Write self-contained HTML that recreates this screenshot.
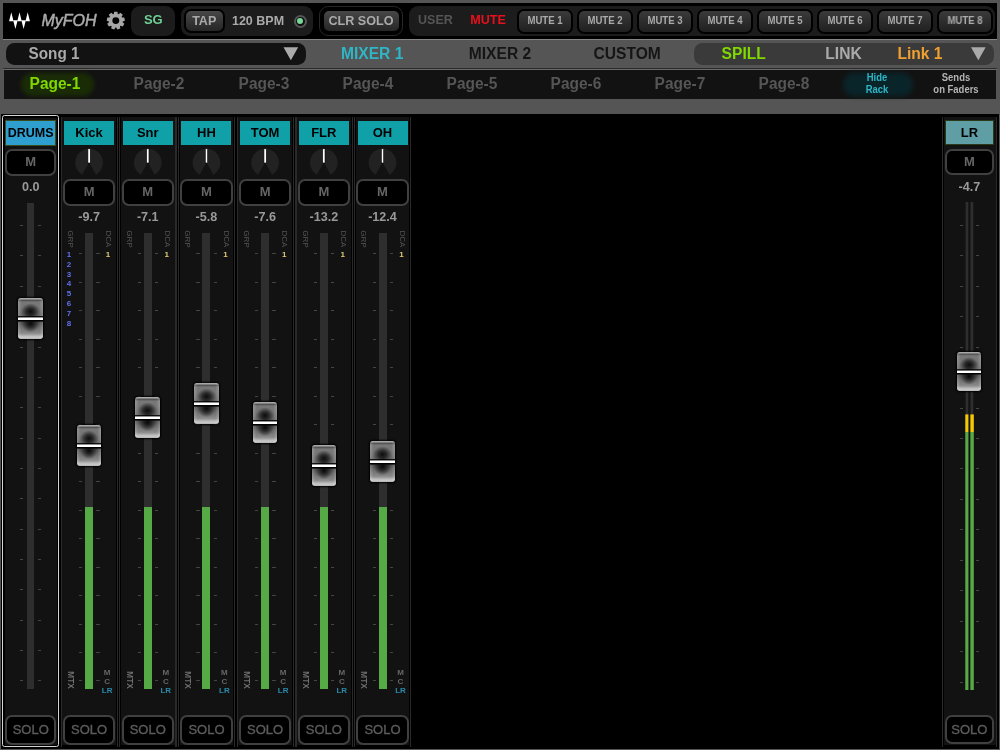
<!DOCTYPE html><html><head><meta charset="utf-8"><title>MyFOH</title><style>
html,body{margin:0;padding:0;}
body{width:1000px;height:750px;overflow:hidden;background:#555;font-family:"Liberation Sans",sans-serif;position:relative;}
div{position:absolute;box-sizing:border-box;}
.t{text-align:center;white-space:nowrap;}
svg{position:absolute;overflow:visible;}
.pill{background:#1c1c1c;border-radius:9px;}
.btn{border:1.5px solid #000;border-radius:6px;background:linear-gradient(#474747,#262626);}
.mbtn{background:#000;border:2px solid #404040;border-radius:7px;}
.lbl{background:#10a0a8;}
.trk{background:#2e2e2e;}
.grn{background:#56aa46;}
.tk{background:#444;height:1px;}
.fk{border-radius:3px;background:
 linear-gradient(#0000 0,#0000 43%,#000 45.5%,#000 47%,#fff 48%,#fff 53.2%,#000 54.2%,#000 56%,#0000 59%),
 radial-gradient(ellipse 38% 20% at 50% 33%,#0c0c0c 0,#0c0c0cb0 45%,#0c0c0c00 100%),
 radial-gradient(ellipse 36% 22% at 50% 62%,#080808 0,#080808a0 45%,#08080800 100%),
 linear-gradient(90deg,#ffffff38 0,#fff0 15%,#fff0 85%,#ffffff38 100%),
 linear-gradient(#b4b4b4 0,#9c9c9c 2.5%,#505050 5.5%,#787878 10%,#767676 22%,#666 44%,#484848 57%,#6a6a6a 70%,#8a8a8a 86%,#cacaca 95.5%,#b4b4b4 100%);
 box-shadow:0 0 2px 1px #000;}
.rot{transform:rotate(90deg);}
</style></head><body><div id="w" style="left:0;top:0;width:1000px;height:750px;will-change:transform;">
<div style="left:3.00px;top:3.00px;width:994.00px;height:35.50px;background:#000;"></div>
<div style="left:3.00px;top:39.00px;width:994.00px;height:1.20px;background:#858585;"></div>
<svg style="left:0;top:0" width="1" height="1"><path fill="#fff" d="M9.05 21.2 L13.55 21.2 L11.30 12.3Z M17.25 21.2 L21.75 21.2 L19.50 12.3Z M25.45 21.2 L29.95 21.2 L27.70 12.3Z M13.15 20.3 L17.65 20.3 L15.40 29.1Z M21.35 20.3 L25.85 20.3 L23.60 29.1Z"/></svg>
<div class="t" style="left:9.00px;top:10.50px;width:120px;height:20px;line-height:20px;font-size:16px;color:#aaa;font-weight:normal;font-style:italic;-webkit-text-stroke:0.5px #aaa;">MyFOH</div>
<svg style="left:0;top:0" width="1" height="1"><path fill="#a6a6a6" fill-rule="evenodd" d="M113.80 13.89 L114.17 11.65 L117.43 11.65 L117.80 13.89 L118.58 14.17 L120.31 12.69 L122.80 14.79 L121.64 16.75 L122.06 17.46 L124.33 17.44 L124.90 20.65 L122.75 21.41 L122.61 22.22 L124.37 23.67 L122.74 26.49 L120.61 25.69 L119.98 26.22 L120.39 28.46 L117.33 29.57 L116.21 27.59 L115.39 27.59 L114.27 29.57 L111.21 28.46 L111.62 26.22 L110.99 25.69 L108.86 26.49 L107.23 23.67 L108.99 22.22 L108.85 21.41 L106.70 20.65 L107.27 17.44 L109.54 17.46 L109.96 16.75 L108.80 14.79 L111.29 12.69 L113.02 14.17Z M112.35 20.60 a3.45 3.45 0 1 0 6.9 0 a3.45 3.45 0 1 0 -6.9 0Z"/></svg>
<div class="pill" style="left:131.00px;top:6.00px;width:44.40px;height:30.00px;"></div>
<div class="t" style="left:93.30px;top:9.90px;width:120px;height:20px;line-height:20px;font-size:13px;color:#6fcf97;font-weight:bold;">SG</div>
<div class="pill" style="left:181.00px;top:6.00px;width:131.50px;height:30.00px;"></div>
<div class="btn" style="left:184.20px;top:9.20px;width:40.40px;height:23.70px;border-width:2px;border-radius:7px;"></div>
<div class="t" style="left:144.20px;top:11.00px;width:120px;height:20px;line-height:20px;font-size:12.5px;color:#aaa;font-weight:bold;">TAP</div>
<div class="t" style="left:198.00px;top:11.00px;width:120px;height:20px;line-height:20px;font-size:12.5px;color:#aaa;font-weight:bold;">120 BPM</div>
<div style="left:293.50px;top:14.50px;width:13.00px;height:13.00px;border-radius:50%;border:2px solid #555;background:#111;"></div>
<div style="left:296.60px;top:17.60px;width:6.80px;height:6.80px;border-radius:50%;background:#78d898;"></div>
<div style="left:319.20px;top:6.20px;width:84.00px;height:29.70px;border:1.5px solid #272727;border-radius:9px;background:#000;"></div>
<div class="btn" style="left:321.80px;top:9.20px;width:79.00px;height:23.70px;border-width:2px;border-radius:7px;"></div>
<div class="t" style="left:301.00px;top:10.90px;width:120px;height:20px;line-height:20px;font-size:12.6px;color:#aaa;font-weight:bold;">CLR SOLO</div>
<div class="pill" style="left:409.00px;top:6.00px;width:586.00px;height:30.00px;"></div>
<div class="t" style="left:375.40px;top:10.40px;width:120px;height:20px;line-height:20px;font-size:12.5px;color:#555;font-weight:bold;">USER</div>
<div class="t" style="left:428.00px;top:10.40px;width:120px;height:20px;line-height:20px;font-size:12.6px;color:#e8101c;font-weight:bold;">MUTE</div>
<div class="btn" style="left:516.50px;top:8.50px;width:56.00px;height:25.00px;background:linear-gradient(#3a3a3a,#202020);border-width:2px;border-radius:7px;"></div>
<div class="t" style="left:484.50px;top:11.40px;width:120px;height:20px;line-height:20px;font-size:10px;color:#aaa;font-weight:bold;transform:scaleX(0.96);">MUTE 1</div>
<div class="btn" style="left:576.50px;top:8.50px;width:56.00px;height:25.00px;background:linear-gradient(#3a3a3a,#202020);border-width:2px;border-radius:7px;"></div>
<div class="t" style="left:544.50px;top:11.40px;width:120px;height:20px;line-height:20px;font-size:10px;color:#aaa;font-weight:bold;transform:scaleX(0.96);">MUTE 2</div>
<div class="btn" style="left:636.50px;top:8.50px;width:56.00px;height:25.00px;background:linear-gradient(#3a3a3a,#202020);border-width:2px;border-radius:7px;"></div>
<div class="t" style="left:604.50px;top:11.40px;width:120px;height:20px;line-height:20px;font-size:10px;color:#aaa;font-weight:bold;transform:scaleX(0.96);">MUTE 3</div>
<div class="btn" style="left:696.50px;top:8.50px;width:56.00px;height:25.00px;background:linear-gradient(#3a3a3a,#202020);border-width:2px;border-radius:7px;"></div>
<div class="t" style="left:664.50px;top:11.40px;width:120px;height:20px;line-height:20px;font-size:10px;color:#aaa;font-weight:bold;transform:scaleX(0.96);">MUTE 4</div>
<div class="btn" style="left:756.50px;top:8.50px;width:56.00px;height:25.00px;background:linear-gradient(#3a3a3a,#202020);border-width:2px;border-radius:7px;"></div>
<div class="t" style="left:724.50px;top:11.40px;width:120px;height:20px;line-height:20px;font-size:10px;color:#aaa;font-weight:bold;transform:scaleX(0.96);">MUTE 5</div>
<div class="btn" style="left:816.50px;top:8.50px;width:56.00px;height:25.00px;background:linear-gradient(#3a3a3a,#202020);border-width:2px;border-radius:7px;"></div>
<div class="t" style="left:784.50px;top:11.40px;width:120px;height:20px;line-height:20px;font-size:10px;color:#aaa;font-weight:bold;transform:scaleX(0.96);">MUTE 6</div>
<div class="btn" style="left:876.50px;top:8.50px;width:56.00px;height:25.00px;background:linear-gradient(#3a3a3a,#202020);border-width:2px;border-radius:7px;"></div>
<div class="t" style="left:844.50px;top:11.40px;width:120px;height:20px;line-height:20px;font-size:10px;color:#aaa;font-weight:bold;transform:scaleX(0.96);">MUTE 7</div>
<div class="btn" style="left:936.50px;top:8.50px;width:56.00px;height:25.00px;background:linear-gradient(#3a3a3a,#202020);border-width:2px;border-radius:7px;"></div>
<div class="t" style="left:904.50px;top:11.40px;width:120px;height:20px;line-height:20px;font-size:10px;color:#aaa;font-weight:bold;transform:scaleX(0.96);">MUTE 8</div>
<div style="left:6.00px;top:43.00px;width:299.80px;height:22.00px;background:#121212;border-radius:8.5px;"></div>
<div class="t" style="left:-6.30px;top:44.00px;width:120px;height:20px;line-height:20px;font-size:15.9px;color:#aaa;font-weight:bold;transform:scaleX(0.962);">Song 1</div>
<div class="t" style="left:312.20px;top:44.40px;width:120px;height:20px;line-height:20px;font-size:15.6px;color:#2fb5c5;font-weight:bold;">MIXER 1</div>
<div class="t" style="left:440.00px;top:44.40px;width:120px;height:20px;line-height:20px;font-size:15.6px;color:#151515;font-weight:bold;">MIXER 2</div>
<div class="t" style="left:567.20px;top:44.40px;width:120px;height:20px;line-height:20px;font-size:15.6px;color:#151515;font-weight:bold;">CUSTOM</div>
<div style="left:694.20px;top:43.00px;width:299.80px;height:22.00px;background:#3a3a3a;border-radius:8.5px;"></div>
<div class="t" style="left:683.70px;top:44.40px;width:120px;height:20px;line-height:20px;font-size:15.6px;color:#80d800;font-weight:bold;">SPILL</div>
<div class="t" style="left:783.50px;top:44.40px;width:120px;height:20px;line-height:20px;font-size:15.6px;color:#aaa;font-weight:bold;">LINK</div>
<div class="t" style="left:860.00px;top:44.40px;width:120px;height:20px;line-height:20px;font-size:15.6px;color:#f0a030;font-weight:bold;">Link 1</div>
<svg style="left:0;top:0" width="1" height="1"><path fill="#aaa" d="M283.5 47.3 L298.2 47.3 L290.85 60.2Z"/><path fill="#aaa" d="M971 47.3 L985.7 47.3 L978.35 60.2Z"/></svg>
<div style="left:3.00px;top:67.60px;width:994.00px;height:1.20px;background:#2a2a2a;"></div>
<div style="left:3.00px;top:69.00px;width:994.00px;height:1.20px;background:#6a6a6a;"></div>
<div style="left:4.00px;top:70.20px;width:992.00px;height:29.00px;background:#121212;"></div>
<div style="left:20.50px;top:72.80px;width:73.50px;height:23.20px;background:#1a2c05;border-radius:11.6px;filter:blur(2.2px);"></div>
<div class="t" style="left:-4.70px;top:74.20px;width:120px;height:20px;line-height:20px;font-size:15.8px;color:#80d800;font-weight:bold;font-kerning:none;transform:scaleX(0.98);">Page-1</div>
<div class="t" style="left:99.47px;top:74.20px;width:120px;height:20px;line-height:20px;font-size:15.8px;color:#555;font-weight:bold;font-kerning:none;transform:scaleX(0.98);">Page-2</div>
<div class="t" style="left:203.64px;top:74.20px;width:120px;height:20px;line-height:20px;font-size:15.8px;color:#555;font-weight:bold;font-kerning:none;transform:scaleX(0.98);">Page-3</div>
<div class="t" style="left:307.81px;top:74.20px;width:120px;height:20px;line-height:20px;font-size:15.8px;color:#555;font-weight:bold;font-kerning:none;transform:scaleX(0.98);">Page-4</div>
<div class="t" style="left:411.98px;top:74.20px;width:120px;height:20px;line-height:20px;font-size:15.8px;color:#555;font-weight:bold;font-kerning:none;transform:scaleX(0.98);">Page-5</div>
<div class="t" style="left:516.15px;top:74.20px;width:120px;height:20px;line-height:20px;font-size:15.8px;color:#555;font-weight:bold;font-kerning:none;transform:scaleX(0.98);">Page-6</div>
<div class="t" style="left:620.32px;top:74.20px;width:120px;height:20px;line-height:20px;font-size:15.8px;color:#555;font-weight:bold;font-kerning:none;transform:scaleX(0.98);">Page-7</div>
<div class="t" style="left:724.49px;top:74.20px;width:120px;height:20px;line-height:20px;font-size:15.8px;color:#555;font-weight:bold;font-kerning:none;transform:scaleX(0.98);">Page-8</div>
<div style="left:842.50px;top:73.30px;width:70.50px;height:23.20px;background:#0a252a;border-radius:11.6px;filter:blur(2.5px);"></div>
<div class="t" style="left:817.00px;top:68.00px;width:120px;height:20px;line-height:20px;font-size:10.3px;color:#2fb5c5;font-weight:bold;transform:scaleX(0.92);">Hide</div>
<div class="t" style="left:817.00px;top:79.60px;width:120px;height:20px;line-height:20px;font-size:10.3px;color:#2fb5c5;font-weight:bold;transform:scaleX(0.92);">Rack</div>
<div class="t" style="left:896.00px;top:68.00px;width:120px;height:20px;line-height:20px;font-size:10.3px;color:#b4b4b4;font-weight:bold;transform:scaleX(0.92);">Sends</div>
<div class="t" style="left:896.00px;top:79.60px;width:120px;height:20px;line-height:20px;font-size:10.3px;color:#b4b4b4;font-weight:bold;transform:scaleX(0.92);">on Faders</div>
<div style="left:1.00px;top:113.50px;width:998.00px;height:635.20px;background:#000;"></div>
<div style="left:2.10px;top:115.30px;width:57.10px;height:631.50px;background:#000;border:1.5px solid #d4d4d4;border-radius:2.5px;"></div>
<div style="left:4.50px;top:118.30px;width:52.40px;height:626.30px;background:#121212;"></div>
<div style="left:5.20px;top:120.20px;width:50.80px;height:25.70px;background:#2f9fd0;border:1px solid #3a4a18;"></div>
<div class="t" style="left:-29.30px;top:123.00px;width:120px;height:20px;line-height:20px;font-size:12.5px;color:#000;font-weight:bold;">DRUMS</div>
<div class="mbtn" style="left:4.60px;top:149.00px;width:51.80px;height:26.60px;"></div>
<div class="t" style="left:-29.30px;top:152.00px;width:120px;height:20px;line-height:20px;font-size:13px;color:#666;font-weight:bold;">M</div>
<div class="t" style="left:-29.30px;top:176.60px;width:120px;height:20px;line-height:20px;font-size:12.6px;color:#999;font-weight:bold;">0.0</div>
<div class="trk" style="left:27.00px;top:203.00px;width:7.40px;height:485.50px;"></div>
<div class="tk" style="left:19.80px;top:225.10px;width:3.40px"></div><div class="tk" style="left:37.80px;top:225.10px;width:3.30px"></div><div class="tk" style="left:19.80px;top:255.45px;width:3.40px"></div><div class="tk" style="left:37.80px;top:255.45px;width:3.30px"></div><div class="tk" style="left:19.80px;top:285.80px;width:3.40px"></div><div class="tk" style="left:37.80px;top:285.80px;width:3.30px"></div><div class="tk" style="left:19.80px;top:316.15px;width:3.40px"></div><div class="tk" style="left:37.80px;top:316.15px;width:3.30px"></div><div class="tk" style="left:19.80px;top:346.50px;width:3.40px"></div><div class="tk" style="left:37.80px;top:346.50px;width:3.30px"></div><div class="tk" style="left:19.80px;top:376.85px;width:3.40px"></div><div class="tk" style="left:37.80px;top:376.85px;width:3.30px"></div><div class="tk" style="left:19.80px;top:407.20px;width:3.40px"></div><div class="tk" style="left:37.80px;top:407.20px;width:3.30px"></div><div class="tk" style="left:19.80px;top:437.55px;width:3.40px"></div><div class="tk" style="left:37.80px;top:437.55px;width:3.30px"></div><div class="tk" style="left:19.80px;top:467.90px;width:3.40px"></div><div class="tk" style="left:37.80px;top:467.90px;width:3.30px"></div><div class="tk" style="left:19.80px;top:498.25px;width:3.40px"></div><div class="tk" style="left:37.80px;top:498.25px;width:3.30px"></div><div class="tk" style="left:19.80px;top:528.60px;width:3.40px"></div><div class="tk" style="left:37.80px;top:528.60px;width:3.30px"></div><div class="tk" style="left:19.80px;top:558.95px;width:3.40px"></div><div class="tk" style="left:37.80px;top:558.95px;width:3.30px"></div><div class="tk" style="left:19.80px;top:589.30px;width:3.40px"></div><div class="tk" style="left:37.80px;top:589.30px;width:3.30px"></div><div class="tk" style="left:19.80px;top:619.65px;width:3.40px"></div><div class="tk" style="left:37.80px;top:619.65px;width:3.30px"></div><div class="tk" style="left:19.80px;top:650.00px;width:3.40px"></div><div class="tk" style="left:37.80px;top:650.00px;width:3.30px"></div><div class="tk" style="left:19.80px;top:680.35px;width:3.40px"></div><div class="tk" style="left:37.80px;top:680.35px;width:3.30px"></div>
<div class="fk" style="left:18.40px;top:298.10px;width:24.60px;height:40.80px;"></div>
<div class="mbtn" style="left:4.80px;top:715.30px;width:51.40px;height:29.40px;"></div>
<div class="t" style="left:-29.30px;top:719.70px;width:120px;height:20px;line-height:20px;font-size:13px;color:#5c5c5c;font-weight:normal;-webkit-text-stroke:0.35px #5c5c5c;">SOLO</div>
<div style="left:60.60px;top:117.00px;width:1.20px;height:629.80px;background:#2a2a2a;"></div>
<div style="left:62.40px;top:117.00px;width:53.60px;height:628.40px;background:#121212;"></div>
<div style="left:116.80px;top:117.00px;width:1.20px;height:629.80px;background:#2a2a2a;"></div>
<div class="lbl" style="left:64.10px;top:120.70px;width:50.00px;height:24.50px;"></div>
<div class="t" style="left:29.10px;top:123.40px;width:120px;height:20px;line-height:20px;font-size:13px;color:#000;font-weight:bold;">Kick</div>
<svg style="left:0;top:0" width="1" height="1"><path fill="#222" d="M89.10 162.60 L82.15 174.64 A13.9 13.9 0 1 1 96.05 174.64Z"/><rect x="87.90" y="148.8" width="2.4" height="14.2" fill="#fff" stroke="#000" stroke-width="0.6"/></svg>
<div class="mbtn" style="left:63.00px;top:178.70px;width:52.20px;height:27.00px;"></div>
<div class="t" style="left:29.10px;top:181.90px;width:120px;height:20px;line-height:20px;font-size:13px;color:#666;font-weight:bold;">M</div>
<div class="t" style="left:29.10px;top:207.00px;width:120px;height:20px;line-height:20px;font-size:12.6px;color:#999;font-weight:bold;">-9.7</div>
<div class="t rot" style="left:54.90px;top:234.00px;width:30px;height:10px;line-height:10px;font-size:8px;color:#555;font-weight:normal;">GRP</div>
<div class="t rot" style="left:93.30px;top:234.00px;width:30px;height:10px;line-height:10px;font-size:8px;color:#555;font-weight:normal;">DCA</div>
<div class="trk" style="left:85.10px;top:233.30px;width:8.00px;height:455.70px;"></div>
<div class="grn" style="left:85.10px;top:507.00px;width:8.00px;height:182.00px;"></div>
<div class="tk" style="left:79.10px;top:253.40px;width:3.30px"></div><div class="tk" style="left:96.30px;top:253.40px;width:3.30px"></div><div class="tk" style="left:79.10px;top:281.87px;width:3.30px"></div><div class="tk" style="left:96.30px;top:281.87px;width:3.30px"></div><div class="tk" style="left:79.10px;top:310.34px;width:3.30px"></div><div class="tk" style="left:96.30px;top:310.34px;width:3.30px"></div><div class="tk" style="left:79.10px;top:338.81px;width:3.30px"></div><div class="tk" style="left:96.30px;top:338.81px;width:3.30px"></div><div class="tk" style="left:79.10px;top:367.28px;width:3.30px"></div><div class="tk" style="left:96.30px;top:367.28px;width:3.30px"></div><div class="tk" style="left:79.10px;top:395.75px;width:3.30px"></div><div class="tk" style="left:96.30px;top:395.75px;width:3.30px"></div><div class="tk" style="left:79.10px;top:424.22px;width:3.30px"></div><div class="tk" style="left:96.30px;top:424.22px;width:3.30px"></div><div class="tk" style="left:79.10px;top:452.69px;width:3.30px"></div><div class="tk" style="left:96.30px;top:452.69px;width:3.30px"></div><div class="tk" style="left:79.10px;top:481.16px;width:3.30px"></div><div class="tk" style="left:96.30px;top:481.16px;width:3.30px"></div><div class="tk" style="left:79.10px;top:509.63px;width:3.30px"></div><div class="tk" style="left:96.30px;top:509.63px;width:3.30px"></div><div class="tk" style="left:79.10px;top:538.10px;width:3.30px"></div><div class="tk" style="left:96.30px;top:538.10px;width:3.30px"></div><div class="tk" style="left:79.10px;top:566.57px;width:3.30px"></div><div class="tk" style="left:96.30px;top:566.57px;width:3.30px"></div><div class="tk" style="left:79.10px;top:595.04px;width:3.30px"></div><div class="tk" style="left:96.30px;top:595.04px;width:3.30px"></div><div class="tk" style="left:79.10px;top:623.51px;width:3.30px"></div><div class="tk" style="left:96.30px;top:623.51px;width:3.30px"></div><div class="tk" style="left:79.10px;top:651.98px;width:3.30px"></div><div class="tk" style="left:96.30px;top:651.98px;width:3.30px"></div><div class="tk" style="left:79.10px;top:680.45px;width:3.30px"></div><div class="tk" style="left:96.30px;top:680.45px;width:3.30px"></div>
<div class="t" style="left:63.00px;top:249.60px;width:12px;height:10px;line-height:10px;font-size:8px;color:#6070f0;font-weight:bold;">1</div>
<div class="t" style="left:63.00px;top:259.55px;width:12px;height:10px;line-height:10px;font-size:8px;color:#6070f0;font-weight:bold;">2</div>
<div class="t" style="left:63.00px;top:269.50px;width:12px;height:10px;line-height:10px;font-size:8px;color:#6070f0;font-weight:bold;">3</div>
<div class="t" style="left:63.00px;top:279.45px;width:12px;height:10px;line-height:10px;font-size:8px;color:#6070f0;font-weight:bold;">4</div>
<div class="t" style="left:63.00px;top:289.40px;width:12px;height:10px;line-height:10px;font-size:8px;color:#6070f0;font-weight:bold;">5</div>
<div class="t" style="left:63.00px;top:299.35px;width:12px;height:10px;line-height:10px;font-size:8px;color:#6070f0;font-weight:bold;">6</div>
<div class="t" style="left:63.00px;top:309.30px;width:12px;height:10px;line-height:10px;font-size:8px;color:#6070f0;font-weight:bold;">7</div>
<div class="t" style="left:63.00px;top:319.25px;width:12px;height:10px;line-height:10px;font-size:8px;color:#6070f0;font-weight:bold;">8</div>
<div class="t" style="left:102.10px;top:249.60px;width:12px;height:10px;line-height:10px;font-size:8px;color:#e0c878;font-weight:bold;">1</div>
<div class="fk" style="left:76.80px;top:425.00px;width:24.60px;height:40.80px;"></div>
<div class="t rot" style="left:55.00px;top:675.30px;width:30px;height:10px;line-height:10px;font-size:8.2px;color:#707070;font-weight:bold;">MTX</div>
<div class="t" style="left:97.10px;top:667.80px;width:20px;height:10px;line-height:10px;font-size:8px;color:#666;font-weight:bold;">M</div>
<div class="t" style="left:97.10px;top:676.80px;width:20px;height:10px;line-height:10px;font-size:8px;color:#666;font-weight:bold;">C</div>
<div class="t" style="left:97.10px;top:686.10px;width:20px;height:10px;line-height:10px;font-size:8px;color:#2a8aaa;font-weight:bold;">LR</div>
<div class="mbtn" style="left:63.00px;top:715.20px;width:52.40px;height:29.40px;"></div>
<div class="t" style="left:29.10px;top:719.70px;width:120px;height:20px;line-height:20px;font-size:13px;color:#5c5c5c;font-weight:normal;-webkit-text-stroke:0.35px #5c5c5c;">SOLO</div>
<div style="left:119.28px;top:117.00px;width:1.20px;height:629.80px;background:#2a2a2a;"></div>
<div style="left:121.08px;top:117.00px;width:53.60px;height:628.40px;background:#121212;"></div>
<div style="left:175.48px;top:117.00px;width:1.20px;height:629.80px;background:#2a2a2a;"></div>
<div class="lbl" style="left:122.78px;top:120.70px;width:50.00px;height:24.50px;"></div>
<div class="t" style="left:87.78px;top:123.40px;width:120px;height:20px;line-height:20px;font-size:13px;color:#000;font-weight:bold;">Snr</div>
<svg style="left:0;top:0" width="1" height="1"><path fill="#222" d="M147.78 162.60 L140.83 174.64 A13.9 13.9 0 1 1 154.73 174.64Z"/><rect x="146.58" y="148.8" width="2.4" height="14.2" fill="#fff" stroke="#000" stroke-width="0.6"/></svg>
<div class="mbtn" style="left:121.68px;top:178.70px;width:52.20px;height:27.00px;"></div>
<div class="t" style="left:87.78px;top:181.90px;width:120px;height:20px;line-height:20px;font-size:13px;color:#666;font-weight:bold;">M</div>
<div class="t" style="left:87.78px;top:207.00px;width:120px;height:20px;line-height:20px;font-size:12.6px;color:#999;font-weight:bold;">-7.1</div>
<div class="t rot" style="left:113.58px;top:234.00px;width:30px;height:10px;line-height:10px;font-size:8px;color:#555;font-weight:normal;">GRP</div>
<div class="t rot" style="left:151.98px;top:234.00px;width:30px;height:10px;line-height:10px;font-size:8px;color:#555;font-weight:normal;">DCA</div>
<div class="trk" style="left:143.78px;top:233.30px;width:8.00px;height:455.70px;"></div>
<div class="grn" style="left:143.78px;top:507.00px;width:8.00px;height:182.00px;"></div>
<div class="tk" style="left:137.78px;top:253.40px;width:3.30px"></div><div class="tk" style="left:154.98px;top:253.40px;width:3.30px"></div><div class="tk" style="left:137.78px;top:281.87px;width:3.30px"></div><div class="tk" style="left:154.98px;top:281.87px;width:3.30px"></div><div class="tk" style="left:137.78px;top:310.34px;width:3.30px"></div><div class="tk" style="left:154.98px;top:310.34px;width:3.30px"></div><div class="tk" style="left:137.78px;top:338.81px;width:3.30px"></div><div class="tk" style="left:154.98px;top:338.81px;width:3.30px"></div><div class="tk" style="left:137.78px;top:367.28px;width:3.30px"></div><div class="tk" style="left:154.98px;top:367.28px;width:3.30px"></div><div class="tk" style="left:137.78px;top:395.75px;width:3.30px"></div><div class="tk" style="left:154.98px;top:395.75px;width:3.30px"></div><div class="tk" style="left:137.78px;top:424.22px;width:3.30px"></div><div class="tk" style="left:154.98px;top:424.22px;width:3.30px"></div><div class="tk" style="left:137.78px;top:452.69px;width:3.30px"></div><div class="tk" style="left:154.98px;top:452.69px;width:3.30px"></div><div class="tk" style="left:137.78px;top:481.16px;width:3.30px"></div><div class="tk" style="left:154.98px;top:481.16px;width:3.30px"></div><div class="tk" style="left:137.78px;top:509.63px;width:3.30px"></div><div class="tk" style="left:154.98px;top:509.63px;width:3.30px"></div><div class="tk" style="left:137.78px;top:538.10px;width:3.30px"></div><div class="tk" style="left:154.98px;top:538.10px;width:3.30px"></div><div class="tk" style="left:137.78px;top:566.57px;width:3.30px"></div><div class="tk" style="left:154.98px;top:566.57px;width:3.30px"></div><div class="tk" style="left:137.78px;top:595.04px;width:3.30px"></div><div class="tk" style="left:154.98px;top:595.04px;width:3.30px"></div><div class="tk" style="left:137.78px;top:623.51px;width:3.30px"></div><div class="tk" style="left:154.98px;top:623.51px;width:3.30px"></div><div class="tk" style="left:137.78px;top:651.98px;width:3.30px"></div><div class="tk" style="left:154.98px;top:651.98px;width:3.30px"></div><div class="tk" style="left:137.78px;top:680.45px;width:3.30px"></div><div class="tk" style="left:154.98px;top:680.45px;width:3.30px"></div>
<div class="t" style="left:160.78px;top:249.60px;width:12px;height:10px;line-height:10px;font-size:8px;color:#e0c878;font-weight:bold;">1</div>
<div class="fk" style="left:135.48px;top:397.00px;width:24.60px;height:40.80px;"></div>
<div class="t rot" style="left:113.68px;top:675.30px;width:30px;height:10px;line-height:10px;font-size:8.2px;color:#707070;font-weight:bold;">MTX</div>
<div class="t" style="left:155.78px;top:667.80px;width:20px;height:10px;line-height:10px;font-size:8px;color:#666;font-weight:bold;">M</div>
<div class="t" style="left:155.78px;top:676.80px;width:20px;height:10px;line-height:10px;font-size:8px;color:#666;font-weight:bold;">C</div>
<div class="t" style="left:155.78px;top:686.10px;width:20px;height:10px;line-height:10px;font-size:8px;color:#2a8aaa;font-weight:bold;">LR</div>
<div class="mbtn" style="left:121.68px;top:715.20px;width:52.40px;height:29.40px;"></div>
<div class="t" style="left:87.78px;top:719.70px;width:120px;height:20px;line-height:20px;font-size:13px;color:#5c5c5c;font-weight:normal;-webkit-text-stroke:0.35px #5c5c5c;">SOLO</div>
<div style="left:177.96px;top:117.00px;width:1.20px;height:629.80px;background:#2a2a2a;"></div>
<div style="left:179.76px;top:117.00px;width:53.60px;height:628.40px;background:#121212;"></div>
<div style="left:234.16px;top:117.00px;width:1.20px;height:629.80px;background:#2a2a2a;"></div>
<div class="lbl" style="left:181.46px;top:120.70px;width:50.00px;height:24.50px;"></div>
<div class="t" style="left:146.46px;top:123.40px;width:120px;height:20px;line-height:20px;font-size:13px;color:#000;font-weight:bold;">HH</div>
<svg style="left:0;top:0" width="1" height="1"><path fill="#222" d="M206.46 162.60 L199.51 174.64 A13.9 13.9 0 1 1 213.41 174.64Z"/><rect x="205.26" y="148.8" width="2.4" height="14.2" fill="#fff" stroke="#000" stroke-width="0.6"/></svg>
<div class="mbtn" style="left:180.36px;top:178.70px;width:52.20px;height:27.00px;"></div>
<div class="t" style="left:146.46px;top:181.90px;width:120px;height:20px;line-height:20px;font-size:13px;color:#666;font-weight:bold;">M</div>
<div class="t" style="left:146.46px;top:207.00px;width:120px;height:20px;line-height:20px;font-size:12.6px;color:#999;font-weight:bold;">-5.8</div>
<div class="t rot" style="left:172.26px;top:234.00px;width:30px;height:10px;line-height:10px;font-size:8px;color:#555;font-weight:normal;">GRP</div>
<div class="t rot" style="left:210.66px;top:234.00px;width:30px;height:10px;line-height:10px;font-size:8px;color:#555;font-weight:normal;">DCA</div>
<div class="trk" style="left:202.46px;top:233.30px;width:8.00px;height:455.70px;"></div>
<div class="grn" style="left:202.46px;top:507.00px;width:8.00px;height:182.00px;"></div>
<div class="tk" style="left:196.46px;top:253.40px;width:3.30px"></div><div class="tk" style="left:213.66px;top:253.40px;width:3.30px"></div><div class="tk" style="left:196.46px;top:281.87px;width:3.30px"></div><div class="tk" style="left:213.66px;top:281.87px;width:3.30px"></div><div class="tk" style="left:196.46px;top:310.34px;width:3.30px"></div><div class="tk" style="left:213.66px;top:310.34px;width:3.30px"></div><div class="tk" style="left:196.46px;top:338.81px;width:3.30px"></div><div class="tk" style="left:213.66px;top:338.81px;width:3.30px"></div><div class="tk" style="left:196.46px;top:367.28px;width:3.30px"></div><div class="tk" style="left:213.66px;top:367.28px;width:3.30px"></div><div class="tk" style="left:196.46px;top:395.75px;width:3.30px"></div><div class="tk" style="left:213.66px;top:395.75px;width:3.30px"></div><div class="tk" style="left:196.46px;top:424.22px;width:3.30px"></div><div class="tk" style="left:213.66px;top:424.22px;width:3.30px"></div><div class="tk" style="left:196.46px;top:452.69px;width:3.30px"></div><div class="tk" style="left:213.66px;top:452.69px;width:3.30px"></div><div class="tk" style="left:196.46px;top:481.16px;width:3.30px"></div><div class="tk" style="left:213.66px;top:481.16px;width:3.30px"></div><div class="tk" style="left:196.46px;top:509.63px;width:3.30px"></div><div class="tk" style="left:213.66px;top:509.63px;width:3.30px"></div><div class="tk" style="left:196.46px;top:538.10px;width:3.30px"></div><div class="tk" style="left:213.66px;top:538.10px;width:3.30px"></div><div class="tk" style="left:196.46px;top:566.57px;width:3.30px"></div><div class="tk" style="left:213.66px;top:566.57px;width:3.30px"></div><div class="tk" style="left:196.46px;top:595.04px;width:3.30px"></div><div class="tk" style="left:213.66px;top:595.04px;width:3.30px"></div><div class="tk" style="left:196.46px;top:623.51px;width:3.30px"></div><div class="tk" style="left:213.66px;top:623.51px;width:3.30px"></div><div class="tk" style="left:196.46px;top:651.98px;width:3.30px"></div><div class="tk" style="left:213.66px;top:651.98px;width:3.30px"></div><div class="tk" style="left:196.46px;top:680.45px;width:3.30px"></div><div class="tk" style="left:213.66px;top:680.45px;width:3.30px"></div>
<div class="t" style="left:219.46px;top:249.60px;width:12px;height:10px;line-height:10px;font-size:8px;color:#e0c878;font-weight:bold;">1</div>
<div class="fk" style="left:194.16px;top:383.10px;width:24.60px;height:40.80px;"></div>
<div class="t rot" style="left:172.36px;top:675.30px;width:30px;height:10px;line-height:10px;font-size:8.2px;color:#707070;font-weight:bold;">MTX</div>
<div class="t" style="left:214.46px;top:667.80px;width:20px;height:10px;line-height:10px;font-size:8px;color:#666;font-weight:bold;">M</div>
<div class="t" style="left:214.46px;top:676.80px;width:20px;height:10px;line-height:10px;font-size:8px;color:#666;font-weight:bold;">C</div>
<div class="t" style="left:214.46px;top:686.10px;width:20px;height:10px;line-height:10px;font-size:8px;color:#2a8aaa;font-weight:bold;">LR</div>
<div class="mbtn" style="left:180.36px;top:715.20px;width:52.40px;height:29.40px;"></div>
<div class="t" style="left:146.46px;top:719.70px;width:120px;height:20px;line-height:20px;font-size:13px;color:#5c5c5c;font-weight:normal;-webkit-text-stroke:0.35px #5c5c5c;">SOLO</div>
<div style="left:236.64px;top:117.00px;width:1.20px;height:629.80px;background:#2a2a2a;"></div>
<div style="left:238.44px;top:117.00px;width:53.60px;height:628.40px;background:#121212;"></div>
<div style="left:292.84px;top:117.00px;width:1.20px;height:629.80px;background:#2a2a2a;"></div>
<div class="lbl" style="left:240.14px;top:120.70px;width:50.00px;height:24.50px;"></div>
<div class="t" style="left:205.14px;top:123.40px;width:120px;height:20px;line-height:20px;font-size:13px;color:#000;font-weight:bold;">TOM</div>
<svg style="left:0;top:0" width="1" height="1"><path fill="#222" d="M265.14 162.60 L258.19 174.64 A13.9 13.9 0 1 1 272.09 174.64Z"/><rect x="263.94" y="148.8" width="2.4" height="14.2" fill="#fff" stroke="#000" stroke-width="0.6"/></svg>
<div class="mbtn" style="left:239.04px;top:178.70px;width:52.20px;height:27.00px;"></div>
<div class="t" style="left:205.14px;top:181.90px;width:120px;height:20px;line-height:20px;font-size:13px;color:#666;font-weight:bold;">M</div>
<div class="t" style="left:205.14px;top:207.00px;width:120px;height:20px;line-height:20px;font-size:12.6px;color:#999;font-weight:bold;">-7.6</div>
<div class="t rot" style="left:230.94px;top:234.00px;width:30px;height:10px;line-height:10px;font-size:8px;color:#555;font-weight:normal;">GRP</div>
<div class="t rot" style="left:269.34px;top:234.00px;width:30px;height:10px;line-height:10px;font-size:8px;color:#555;font-weight:normal;">DCA</div>
<div class="trk" style="left:261.14px;top:233.30px;width:8.00px;height:455.70px;"></div>
<div class="grn" style="left:261.14px;top:507.00px;width:8.00px;height:182.00px;"></div>
<div class="tk" style="left:255.14px;top:253.40px;width:3.30px"></div><div class="tk" style="left:272.34px;top:253.40px;width:3.30px"></div><div class="tk" style="left:255.14px;top:281.87px;width:3.30px"></div><div class="tk" style="left:272.34px;top:281.87px;width:3.30px"></div><div class="tk" style="left:255.14px;top:310.34px;width:3.30px"></div><div class="tk" style="left:272.34px;top:310.34px;width:3.30px"></div><div class="tk" style="left:255.14px;top:338.81px;width:3.30px"></div><div class="tk" style="left:272.34px;top:338.81px;width:3.30px"></div><div class="tk" style="left:255.14px;top:367.28px;width:3.30px"></div><div class="tk" style="left:272.34px;top:367.28px;width:3.30px"></div><div class="tk" style="left:255.14px;top:395.75px;width:3.30px"></div><div class="tk" style="left:272.34px;top:395.75px;width:3.30px"></div><div class="tk" style="left:255.14px;top:424.22px;width:3.30px"></div><div class="tk" style="left:272.34px;top:424.22px;width:3.30px"></div><div class="tk" style="left:255.14px;top:452.69px;width:3.30px"></div><div class="tk" style="left:272.34px;top:452.69px;width:3.30px"></div><div class="tk" style="left:255.14px;top:481.16px;width:3.30px"></div><div class="tk" style="left:272.34px;top:481.16px;width:3.30px"></div><div class="tk" style="left:255.14px;top:509.63px;width:3.30px"></div><div class="tk" style="left:272.34px;top:509.63px;width:3.30px"></div><div class="tk" style="left:255.14px;top:538.10px;width:3.30px"></div><div class="tk" style="left:272.34px;top:538.10px;width:3.30px"></div><div class="tk" style="left:255.14px;top:566.57px;width:3.30px"></div><div class="tk" style="left:272.34px;top:566.57px;width:3.30px"></div><div class="tk" style="left:255.14px;top:595.04px;width:3.30px"></div><div class="tk" style="left:272.34px;top:595.04px;width:3.30px"></div><div class="tk" style="left:255.14px;top:623.51px;width:3.30px"></div><div class="tk" style="left:272.34px;top:623.51px;width:3.30px"></div><div class="tk" style="left:255.14px;top:651.98px;width:3.30px"></div><div class="tk" style="left:272.34px;top:651.98px;width:3.30px"></div><div class="tk" style="left:255.14px;top:680.45px;width:3.30px"></div><div class="tk" style="left:272.34px;top:680.45px;width:3.30px"></div>
<div class="t" style="left:278.14px;top:249.60px;width:12px;height:10px;line-height:10px;font-size:8px;color:#e0c878;font-weight:bold;">1</div>
<div class="fk" style="left:252.84px;top:402.10px;width:24.60px;height:40.80px;"></div>
<div class="t rot" style="left:231.04px;top:675.30px;width:30px;height:10px;line-height:10px;font-size:8.2px;color:#707070;font-weight:bold;">MTX</div>
<div class="t" style="left:273.14px;top:667.80px;width:20px;height:10px;line-height:10px;font-size:8px;color:#666;font-weight:bold;">M</div>
<div class="t" style="left:273.14px;top:676.80px;width:20px;height:10px;line-height:10px;font-size:8px;color:#666;font-weight:bold;">C</div>
<div class="t" style="left:273.14px;top:686.10px;width:20px;height:10px;line-height:10px;font-size:8px;color:#2a8aaa;font-weight:bold;">LR</div>
<div class="mbtn" style="left:239.04px;top:715.20px;width:52.40px;height:29.40px;"></div>
<div class="t" style="left:205.14px;top:719.70px;width:120px;height:20px;line-height:20px;font-size:13px;color:#5c5c5c;font-weight:normal;-webkit-text-stroke:0.35px #5c5c5c;">SOLO</div>
<div style="left:295.32px;top:117.00px;width:1.20px;height:629.80px;background:#2a2a2a;"></div>
<div style="left:297.12px;top:117.00px;width:53.60px;height:628.40px;background:#121212;"></div>
<div style="left:351.52px;top:117.00px;width:1.20px;height:629.80px;background:#2a2a2a;"></div>
<div class="lbl" style="left:298.82px;top:120.70px;width:50.00px;height:24.50px;"></div>
<div class="t" style="left:263.82px;top:123.40px;width:120px;height:20px;line-height:20px;font-size:13px;color:#000;font-weight:bold;">FLR</div>
<svg style="left:0;top:0" width="1" height="1"><path fill="#222" d="M323.82 162.60 L316.87 174.64 A13.9 13.9 0 1 1 330.77 174.64Z"/><rect x="322.62" y="148.8" width="2.4" height="14.2" fill="#fff" stroke="#000" stroke-width="0.6"/></svg>
<div class="mbtn" style="left:297.72px;top:178.70px;width:52.20px;height:27.00px;"></div>
<div class="t" style="left:263.82px;top:181.90px;width:120px;height:20px;line-height:20px;font-size:13px;color:#666;font-weight:bold;">M</div>
<div class="t" style="left:263.82px;top:207.00px;width:120px;height:20px;line-height:20px;font-size:12.6px;color:#999;font-weight:bold;">-13.2</div>
<div class="t rot" style="left:289.62px;top:234.00px;width:30px;height:10px;line-height:10px;font-size:8px;color:#555;font-weight:normal;">GRP</div>
<div class="t rot" style="left:328.02px;top:234.00px;width:30px;height:10px;line-height:10px;font-size:8px;color:#555;font-weight:normal;">DCA</div>
<div class="trk" style="left:319.82px;top:233.30px;width:8.00px;height:455.70px;"></div>
<div class="grn" style="left:319.82px;top:507.00px;width:8.00px;height:182.00px;"></div>
<div class="tk" style="left:313.82px;top:253.40px;width:3.30px"></div><div class="tk" style="left:331.02px;top:253.40px;width:3.30px"></div><div class="tk" style="left:313.82px;top:281.87px;width:3.30px"></div><div class="tk" style="left:331.02px;top:281.87px;width:3.30px"></div><div class="tk" style="left:313.82px;top:310.34px;width:3.30px"></div><div class="tk" style="left:331.02px;top:310.34px;width:3.30px"></div><div class="tk" style="left:313.82px;top:338.81px;width:3.30px"></div><div class="tk" style="left:331.02px;top:338.81px;width:3.30px"></div><div class="tk" style="left:313.82px;top:367.28px;width:3.30px"></div><div class="tk" style="left:331.02px;top:367.28px;width:3.30px"></div><div class="tk" style="left:313.82px;top:395.75px;width:3.30px"></div><div class="tk" style="left:331.02px;top:395.75px;width:3.30px"></div><div class="tk" style="left:313.82px;top:424.22px;width:3.30px"></div><div class="tk" style="left:331.02px;top:424.22px;width:3.30px"></div><div class="tk" style="left:313.82px;top:452.69px;width:3.30px"></div><div class="tk" style="left:331.02px;top:452.69px;width:3.30px"></div><div class="tk" style="left:313.82px;top:481.16px;width:3.30px"></div><div class="tk" style="left:331.02px;top:481.16px;width:3.30px"></div><div class="tk" style="left:313.82px;top:509.63px;width:3.30px"></div><div class="tk" style="left:331.02px;top:509.63px;width:3.30px"></div><div class="tk" style="left:313.82px;top:538.10px;width:3.30px"></div><div class="tk" style="left:331.02px;top:538.10px;width:3.30px"></div><div class="tk" style="left:313.82px;top:566.57px;width:3.30px"></div><div class="tk" style="left:331.02px;top:566.57px;width:3.30px"></div><div class="tk" style="left:313.82px;top:595.04px;width:3.30px"></div><div class="tk" style="left:331.02px;top:595.04px;width:3.30px"></div><div class="tk" style="left:313.82px;top:623.51px;width:3.30px"></div><div class="tk" style="left:331.02px;top:623.51px;width:3.30px"></div><div class="tk" style="left:313.82px;top:651.98px;width:3.30px"></div><div class="tk" style="left:331.02px;top:651.98px;width:3.30px"></div><div class="tk" style="left:313.82px;top:680.45px;width:3.30px"></div><div class="tk" style="left:331.02px;top:680.45px;width:3.30px"></div>
<div class="t" style="left:336.82px;top:249.60px;width:12px;height:10px;line-height:10px;font-size:8px;color:#e0c878;font-weight:bold;">1</div>
<div class="fk" style="left:311.52px;top:445.20px;width:24.60px;height:40.80px;"></div>
<div class="t rot" style="left:289.72px;top:675.30px;width:30px;height:10px;line-height:10px;font-size:8.2px;color:#707070;font-weight:bold;">MTX</div>
<div class="t" style="left:331.82px;top:667.80px;width:20px;height:10px;line-height:10px;font-size:8px;color:#666;font-weight:bold;">M</div>
<div class="t" style="left:331.82px;top:676.80px;width:20px;height:10px;line-height:10px;font-size:8px;color:#666;font-weight:bold;">C</div>
<div class="t" style="left:331.82px;top:686.10px;width:20px;height:10px;line-height:10px;font-size:8px;color:#2a8aaa;font-weight:bold;">LR</div>
<div class="mbtn" style="left:297.72px;top:715.20px;width:52.40px;height:29.40px;"></div>
<div class="t" style="left:263.82px;top:719.70px;width:120px;height:20px;line-height:20px;font-size:13px;color:#5c5c5c;font-weight:normal;-webkit-text-stroke:0.35px #5c5c5c;">SOLO</div>
<div style="left:354.00px;top:117.00px;width:1.20px;height:629.80px;background:#2a2a2a;"></div>
<div style="left:355.80px;top:117.00px;width:53.60px;height:628.40px;background:#121212;"></div>
<div style="left:410.20px;top:117.00px;width:1.20px;height:629.80px;background:#2a2a2a;"></div>
<div class="lbl" style="left:357.50px;top:120.70px;width:50.00px;height:24.50px;"></div>
<div class="t" style="left:322.50px;top:123.40px;width:120px;height:20px;line-height:20px;font-size:13px;color:#000;font-weight:bold;">OH</div>
<svg style="left:0;top:0" width="1" height="1"><path fill="#222" d="M382.50 162.60 L375.55 174.64 A13.9 13.9 0 1 1 389.45 174.64Z"/><rect x="381.30" y="148.8" width="2.4" height="14.2" fill="#fff" stroke="#000" stroke-width="0.6"/></svg>
<div class="mbtn" style="left:356.40px;top:178.70px;width:52.20px;height:27.00px;"></div>
<div class="t" style="left:322.50px;top:181.90px;width:120px;height:20px;line-height:20px;font-size:13px;color:#666;font-weight:bold;">M</div>
<div class="t" style="left:322.50px;top:207.00px;width:120px;height:20px;line-height:20px;font-size:12.6px;color:#999;font-weight:bold;">-12.4</div>
<div class="t rot" style="left:348.30px;top:234.00px;width:30px;height:10px;line-height:10px;font-size:8px;color:#555;font-weight:normal;">GRP</div>
<div class="t rot" style="left:386.70px;top:234.00px;width:30px;height:10px;line-height:10px;font-size:8px;color:#555;font-weight:normal;">DCA</div>
<div class="trk" style="left:378.50px;top:233.30px;width:8.00px;height:455.70px;"></div>
<div class="grn" style="left:378.50px;top:507.00px;width:8.00px;height:182.00px;"></div>
<div class="tk" style="left:372.50px;top:253.40px;width:3.30px"></div><div class="tk" style="left:389.70px;top:253.40px;width:3.30px"></div><div class="tk" style="left:372.50px;top:281.87px;width:3.30px"></div><div class="tk" style="left:389.70px;top:281.87px;width:3.30px"></div><div class="tk" style="left:372.50px;top:310.34px;width:3.30px"></div><div class="tk" style="left:389.70px;top:310.34px;width:3.30px"></div><div class="tk" style="left:372.50px;top:338.81px;width:3.30px"></div><div class="tk" style="left:389.70px;top:338.81px;width:3.30px"></div><div class="tk" style="left:372.50px;top:367.28px;width:3.30px"></div><div class="tk" style="left:389.70px;top:367.28px;width:3.30px"></div><div class="tk" style="left:372.50px;top:395.75px;width:3.30px"></div><div class="tk" style="left:389.70px;top:395.75px;width:3.30px"></div><div class="tk" style="left:372.50px;top:424.22px;width:3.30px"></div><div class="tk" style="left:389.70px;top:424.22px;width:3.30px"></div><div class="tk" style="left:372.50px;top:452.69px;width:3.30px"></div><div class="tk" style="left:389.70px;top:452.69px;width:3.30px"></div><div class="tk" style="left:372.50px;top:481.16px;width:3.30px"></div><div class="tk" style="left:389.70px;top:481.16px;width:3.30px"></div><div class="tk" style="left:372.50px;top:509.63px;width:3.30px"></div><div class="tk" style="left:389.70px;top:509.63px;width:3.30px"></div><div class="tk" style="left:372.50px;top:538.10px;width:3.30px"></div><div class="tk" style="left:389.70px;top:538.10px;width:3.30px"></div><div class="tk" style="left:372.50px;top:566.57px;width:3.30px"></div><div class="tk" style="left:389.70px;top:566.57px;width:3.30px"></div><div class="tk" style="left:372.50px;top:595.04px;width:3.30px"></div><div class="tk" style="left:389.70px;top:595.04px;width:3.30px"></div><div class="tk" style="left:372.50px;top:623.51px;width:3.30px"></div><div class="tk" style="left:389.70px;top:623.51px;width:3.30px"></div><div class="tk" style="left:372.50px;top:651.98px;width:3.30px"></div><div class="tk" style="left:389.70px;top:651.98px;width:3.30px"></div><div class="tk" style="left:372.50px;top:680.45px;width:3.30px"></div><div class="tk" style="left:389.70px;top:680.45px;width:3.30px"></div>
<div class="t" style="left:395.50px;top:249.60px;width:12px;height:10px;line-height:10px;font-size:8px;color:#e0c878;font-weight:bold;">1</div>
<div class="fk" style="left:370.20px;top:441.00px;width:24.60px;height:40.80px;"></div>
<div class="t rot" style="left:348.40px;top:675.30px;width:30px;height:10px;line-height:10px;font-size:8.2px;color:#707070;font-weight:bold;">MTX</div>
<div class="t" style="left:390.50px;top:667.80px;width:20px;height:10px;line-height:10px;font-size:8px;color:#666;font-weight:bold;">M</div>
<div class="t" style="left:390.50px;top:676.80px;width:20px;height:10px;line-height:10px;font-size:8px;color:#666;font-weight:bold;">C</div>
<div class="t" style="left:390.50px;top:686.10px;width:20px;height:10px;line-height:10px;font-size:8px;color:#2a8aaa;font-weight:bold;">LR</div>
<div class="mbtn" style="left:356.40px;top:715.20px;width:52.40px;height:29.40px;"></div>
<div class="t" style="left:322.50px;top:719.70px;width:120px;height:20px;line-height:20px;font-size:13px;color:#5c5c5c;font-weight:normal;-webkit-text-stroke:0.35px #5c5c5c;">SOLO</div>
<div style="left:942.00px;top:117.00px;width:1.10px;height:629.80px;background:#2a2a2a;"></div>
<div style="left:943.60px;top:117.00px;width:52.00px;height:628.40px;background:#121212;"></div>
<div style="left:996.00px;top:117.00px;width:1.10px;height:629.80px;background:#2a2a2a;"></div>
<div style="left:945.20px;top:120.30px;width:48.80px;height:24.90px;background:#5f9ea5;border:1px solid #2a3a18;"></div>
<div class="t" style="left:909.40px;top:123.00px;width:120px;height:20px;line-height:20px;font-size:13px;color:#000;font-weight:bold;">LR</div>
<div class="mbtn" style="left:944.70px;top:149.00px;width:49.70px;height:26.40px;"></div>
<div class="t" style="left:909.40px;top:152.00px;width:120px;height:20px;line-height:20px;font-size:13px;color:#666;font-weight:bold;">M</div>
<div class="t" style="left:909.40px;top:176.80px;width:120px;height:20px;line-height:20px;font-size:12.6px;color:#999;font-weight:bold;">-4.7</div>
<svg style="left:0;top:0" width="1" height="1"><rect x="965.6" y="202" width="2.70" height="488.00" fill="#2e2e2e"/><rect x="970.5" y="202" width="2.80" height="488.00" fill="#2e2e2e"/><rect x="965.3" y="432" width="3.10" height="258.00" fill="#56aa46"/><rect x="970.4" y="432" width="3.40" height="258.00" fill="#56aa46"/><rect x="965.3" y="414.4" width="3.10" height="17.60" fill="#f5c800"/><rect x="970.4" y="414.4" width="3.40" height="17.60" fill="#f5c800"/></svg>
<div class="tk" style="left:959.60px;top:224.80px;width:3.10px"></div><div class="tk" style="left:976.10px;top:224.80px;width:3.20px"></div><div class="tk" style="left:959.60px;top:255.26px;width:3.10px"></div><div class="tk" style="left:976.10px;top:255.26px;width:3.20px"></div><div class="tk" style="left:959.60px;top:285.72px;width:3.10px"></div><div class="tk" style="left:976.10px;top:285.72px;width:3.20px"></div><div class="tk" style="left:959.60px;top:316.18px;width:3.10px"></div><div class="tk" style="left:976.10px;top:316.18px;width:3.20px"></div><div class="tk" style="left:959.60px;top:346.64px;width:3.10px"></div><div class="tk" style="left:976.10px;top:346.64px;width:3.20px"></div><div class="tk" style="left:959.60px;top:377.10px;width:3.10px"></div><div class="tk" style="left:976.10px;top:377.10px;width:3.20px"></div><div class="tk" style="left:959.60px;top:407.56px;width:3.10px"></div><div class="tk" style="left:976.10px;top:407.56px;width:3.20px"></div><div class="tk" style="left:959.60px;top:438.02px;width:3.10px"></div><div class="tk" style="left:976.10px;top:438.02px;width:3.20px"></div><div class="tk" style="left:959.60px;top:468.48px;width:3.10px"></div><div class="tk" style="left:976.10px;top:468.48px;width:3.20px"></div><div class="tk" style="left:959.60px;top:498.94px;width:3.10px"></div><div class="tk" style="left:976.10px;top:498.94px;width:3.20px"></div><div class="tk" style="left:959.60px;top:529.40px;width:3.10px"></div><div class="tk" style="left:976.10px;top:529.40px;width:3.20px"></div><div class="tk" style="left:959.60px;top:559.86px;width:3.10px"></div><div class="tk" style="left:976.10px;top:559.86px;width:3.20px"></div><div class="tk" style="left:959.60px;top:590.32px;width:3.10px"></div><div class="tk" style="left:976.10px;top:590.32px;width:3.20px"></div><div class="tk" style="left:959.60px;top:620.78px;width:3.10px"></div><div class="tk" style="left:976.10px;top:620.78px;width:3.20px"></div><div class="tk" style="left:959.60px;top:651.24px;width:3.10px"></div><div class="tk" style="left:976.10px;top:651.24px;width:3.20px"></div><div class="tk" style="left:959.60px;top:681.70px;width:3.10px"></div><div class="tk" style="left:976.10px;top:681.70px;width:3.20px"></div>
<div class="fk" style="left:957.00px;top:352.00px;width:24.40px;height:39.40px;"></div>
<div class="mbtn" style="left:945.00px;top:715.20px;width:49.20px;height:29.30px;"></div>
<div class="t" style="left:909.40px;top:719.70px;width:120px;height:20px;line-height:20px;font-size:13px;color:#5c5c5c;font-weight:normal;-webkit-text-stroke:0.35px #5c5c5c;">SOLO</div>
</div></body></html>
